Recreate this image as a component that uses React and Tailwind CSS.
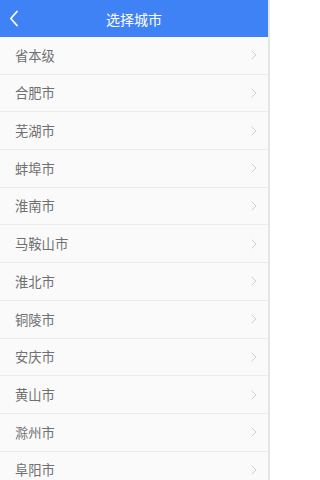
import React from 'react';

const cities = ['省本级', '合肥市', '芜湖市', '蚌埠市', '淮南市', '马鞍山市', '淮北市', '铜陵市', '安庆市', '黄山市', '滁州市', '阜阳市'];

export default function App() {
  return (
    <div className="w-[270px] h-[480px] overflow-hidden bg-[#fafafa] border-r-2 border-[#e6e6e6] font-['Noto_Sans_CJK_SC','Noto_Sans',sans-serif]">
      <div className="h-[37px] bg-[#3f82f5] flex items-center relative">
        <svg className="absolute left-[9px] top-[10px]" width="10" height="17" viewBox="0 0 10 17" fill="none">
          <path d="M8 1.5L1.8 8.5L8 15.5" stroke="#fff" strokeWidth="1.8" strokeLinecap="round" strokeLinejoin="round" />
        </svg>
        <div className="flex-1 text-center text-white text-[14px] leading-none">选择城市</div>
      </div>
      <div>
        {cities.map((city) => (
          <div key={city} className="h-[37.7px] flex items-center justify-between pl-[15px] pr-[11px] border-b border-[#ececec]">
            <span className="text-[13.3px] text-[#707070] leading-none">{city}</span>
            <svg width="6" height="10" viewBox="0 0 6 10" fill="none">
              <path d="M1 1L5 5L1 9" stroke="#cfcfcf" strokeWidth="1" strokeLinecap="round" strokeLinejoin="round" />
            </svg>
          </div>
        ))}
      </div>
    </div>
  );
}
